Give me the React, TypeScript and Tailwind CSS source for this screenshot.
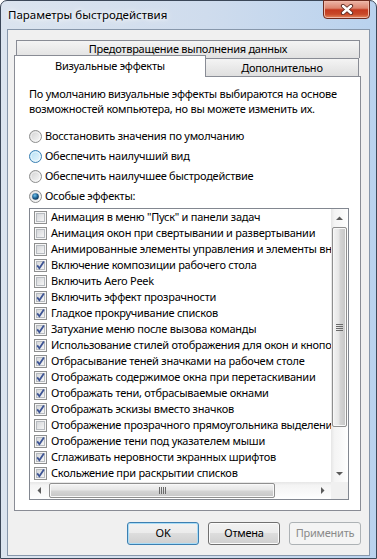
import React from "react";

const effects: [string, boolean][] = [
  ["Анимация в меню \"Пуск\" и панели задач", false],
  ["Анимация окон при свертывании и развертывании", false],
  ["Анимированные элементы управления и элементы внутри окна", false],
  ["Включение композиции рабочего стола", true],
  ["Включить Aero Peek", false],
  ["Включить эффект прозрачности", true],
  ["Гладкое прокручивание списков", true],
  ["Затухание меню после вызова команды", true],
  ["Использование стилей отображения для окон и кнопок", true],
  ["Отбрасывание теней значками на рабочем столе", true],
  ["Отображать содержимое окна при перетаскивании", true],
  ["Отображать тени, отбрасываемые окнами", true],
  ["Отображать эскизы вместо значков", true],
  ["Отображение прозрачного прямоугольника выделения", false],
  ["Отображение тени под указателем мыши", true],
  ["Сглаживать неровности экранных шрифтов", true],
  ["Скольжение при раскрытии списков", true],
];

// shared gradients for the radio / checkbox glyphs
function Defs() {
  return (
    <svg width="0" height="0" className="absolute">
      <defs>
        <linearGradient id="radOff" x1="0" y1="0" x2="1" y2="1">
          <stop offset="0" stopColor="#cfcfcf" />
          <stop offset="1" stopColor="#fbfbfb" />
        </linearGradient>
        <linearGradient id="radHover" x1="0" y1="0" x2="1" y2="1">
          <stop offset="0" stopColor="#b1dff5" />
          <stop offset="1" stopColor="#edf8fd" />
        </linearGradient>
        <radialGradient id="radDot" cx="0.4" cy="0.35" r="0.7">
          <stop offset="0" stopColor="#6ec2ee" />
          <stop offset="0.6" stopColor="#1b5d8e" />
          <stop offset="1" stopColor="#0c2f4d" />
        </radialGradient>
        <linearGradient id="chkIn" x1="0" y1="0" x2="1" y2="1">
          <stop offset="0" stopColor="#d3d5d8" />
          <stop offset="1" stopColor="#f7f7f7" />
        </linearGradient>
      </defs>
    </svg>
  );
}

function Radio({ kind }: { kind: "off" | "hover" | "on" }) {
  return (
    <svg width="13" height="13" viewBox="0 0 13 13" className="shrink-0">
      <circle
        cx="6.5"
        cy="6.5"
        r="6"
        fill={kind === "hover" ? "url(#radHover)" : "url(#radOff)"}
        stroke={kind === "hover" ? "#3c7fb1" : "#8e8f8f"}
      />
      <circle cx="6.5" cy="6.5" r="4.5" fill="none" stroke="#ffffff" strokeOpacity="0.5" />
      {kind === "on" && <circle cx="6.5" cy="6.5" r="3.3" fill="url(#radDot)" />}
    </svg>
  );
}

function Check({ on }: { on: boolean }) {
  return (
    <svg width="13" height="13" viewBox="0 0 13 13" className="shrink-0">
      <rect x="0.5" y="0.5" width="12" height="12" fill="#f6f6f6" stroke="#8e8f8f" />
      <rect x="2.5" y="2.5" width="8" height="8" fill="url(#chkIn)" stroke="#b7bbc0" />
      {on && (
        <path d="M3.2 6.4 L5.4 9.2 L9.9 2.6" fill="none" stroke="#3d5494" strokeWidth="1.8" />
      )}
    </svg>
  );
}

function Arrow({ dir }: { dir: "up" | "down" | "left" | "right" }) {
  const pts = {
    up: "0,4 3.5,0.5 7,4",
    down: "0,0 3.5,3.5 7,0",
    left: "4,0 0.5,3.5 4,7",
    right: "0,0 3.5,3.5 0,7",
  }[dir];
  const vertical = dir === "up" || dir === "down";
  return (
    <svg width={vertical ? 7 : 4} height={vertical ? 4 : 7}>
      <polygon points={pts} fill="#5b5b5b" />
    </svg>
  );
}

function Button({ children, kind }: { children: React.ReactNode; kind?: "default" | "disabled" }) {
  return (
    <div
      className={
        kind === "disabled"
          ? "w-[72px] h-[23px] rounded-[3px] border border-[#adb2b5] bg-[#f4f4f4] text-[#8a8a8a] flex items-center justify-center"
          : kind === "default"
            ? "w-[72px] h-[23px] rounded-[3px] border border-[#3c7fb1] bg-[linear-gradient(#f2f2f2_0%,#ebebeb_50%,#dddddd_50%,#cfcfcf_100%)] shadow-[inset_0_0_0_1px_#a9dcf6] flex items-center justify-center"
            : "w-[72px] h-[23px] rounded-[3px] border border-[#707070] bg-[linear-gradient(#f2f2f2_0%,#ebebeb_50%,#dddddd_50%,#cfcfcf_100%)] shadow-[inset_0_0_0_1px_#fbfbfb] flex items-center justify-center"
      }
    >
      {children}
    </div>
  );
}

export default function App() {
  return (
    <div className="w-[377px] h-[559px] overflow-hidden font-['Noto_Sans',sans-serif] text-[11px] tracking-[-0.25px] text-black">
      <Defs />
      <div className="relative h-full flex flex-col rounded-t-[7px] border border-[#3b4758] bg-[linear-gradient(90deg,#dbe4ef,#cfdced_55%,#b9d2ee)] px-[6px] pb-[2px]">
        {/* title bar */}
        <div className="h-[28px] flex items-center pl-[1px] text-[11.5px] tracking-normal [text-shadow:0_0_8px_#fff,0_0_4px_#fff]">
          Параметры быстродействия
        </div>
        <div className="absolute top-[-1px] right-[6px] w-[47px] h-[19px] rounded-b-[4px] border border-[#6e2b1f] bg-[linear-gradient(#ecb5a7,#dd8670_42%,#c4391f_52%,#c8492a_78%,#e58a5f)] shadow-[inset_0_0_0_1px_#f0b8a8] flex items-center justify-center">
          <svg width="14" height="11" viewBox="0 0 14 11">
            <path d="M3 2 L11 9 M11 2 L3 9" stroke="#5b2a22" strokeWidth="4.2" strokeLinecap="round" />
            <path d="M3 2 L11 9 M11 2 L3 9" stroke="#ffffff" strokeWidth="2.4" strokeLinecap="round" />
          </svg>
        </div>

        {/* client area */}
        <div className="flex-1 border border-[#8797ab] bg-[#f0f0f0] pl-[6px] pt-[10px]">
          <div className="w-[347px]">
            <div className="ml-[2px] w-[344px] h-[18px] border border-b-0 border-[#898c95] bg-[linear-gradient(#f4f4f4,#e1e1e1)] text-center leading-[16px]">
              Предотвращение выполнения данных
            </div>
            <div className="flex items-end -mt-[3px] h-[21px]">
              <div className="relative z-10 w-[192px] h-[22px] -mb-[1px] border border-b-0 border-[#898c95] bg-white text-center leading-[20px]">
                Визуальные эффекты
              </div>
              <div className="-ml-[1px] w-[154px] h-[18px] border border-b-0 border-[#898c95] bg-[linear-gradient(#f4f4f4,#dfdfdf)] text-center leading-[17px]">
                Дополнительно
              </div>
            </div>

            <div className="h-[435px] border border-[#898c95] bg-white pl-[14px] pt-[9px]">
              <p className="leading-[15px] whitespace-nowrap">
                По умолчанию визуальные эффекты выбираются на основе
                <br />
                возможностей компьютера, но вы можете изменить их.
              </p>

              <div className="mt-[10px]">
                {(
                  [
                    ["Восстановить значения по умолчанию", "off"],
                    ["Обеспечить наилучший вид", "hover"],
                    ["Обеспечить наилучшее быстродействие", "off"],
                    ["Особые эффекты:", "on"],
                  ] as [string, "off" | "hover" | "on"][]
                ).map(([label, kind]) => (
                  <div key={label} className="h-[20px] flex items-center gap-[3px]">
                    <Radio kind={kind} />
                    <span>{label}</span>
                  </div>
                ))}
              </div>

              {/* effects list */}
              <div className="mt-[2px] w-[320px] h-[292px] border border-[#828790] flex flex-col">
                <div className="flex">
                  <div className="w-[301px] h-[273px] overflow-hidden">
                    {effects.map(([label, on]) => (
                      <div key={label} className="h-[16px] flex items-center gap-[4px] pl-[4px] whitespace-nowrap">
                        <Check on={on} />
                        <span>{label}</span>
                      </div>
                    ))}
                  </div>
                  <div className="w-[17px] h-[273px] flex flex-col bg-[linear-gradient(90deg,#e6e6e6,#f4f4f4_20%,#fbfbfb_80%,#ffffff)]">
                    <div className="h-[17px] flex items-center justify-center">
                      <Arrow dir="up" />
                    </div>
                    <div className="mt-[1px] ml-[1px] w-[15px] h-[200px] rounded-[2px] border border-[#8f8f8f] bg-[linear-gradient(90deg,#f4f4f4,#e6e6e6_45%,#d4d4d4_55%,#c6c6c6)] shadow-[inset_0_0_0_1px_#f8f8f8] flex items-center justify-center">
                      <svg width="7" height="7">
                        <path d="M0 0.5 H7 M0 2.5 H7 M0 4.5 H7 M0 6.5 H7" stroke="#6a6a6a" />
                      </svg>
                    </div>
                    <div className="flex-1" />
                    <div className="h-[17px] flex items-center justify-center">
                      <Arrow dir="down" />
                    </div>
                  </div>
                </div>
                <div className="flex">
                  <div className="w-[301px] h-[17px] flex items-center bg-[linear-gradient(#e6e6e6,#f4f4f4_20%,#fbfbfb_80%,#ffffff)]">
                    <div className="w-[17px] h-[17px] flex items-center justify-center">
                      <Arrow dir="left" />
                    </div>
                    <div className="ml-[2px] w-[226px] h-[15px] rounded-[2px] border border-[#8f8f8f] bg-[linear-gradient(#f4f4f4,#e6e6e6_45%,#d4d4d4_55%,#c6c6c6)] shadow-[inset_0_0_0_1px_#f8f8f8] flex items-center justify-center">
                      <svg width="7" height="7">
                        <path d="M0.5 0 V7 M2.5 0 V7 M4.5 0 V7 M6.5 0 V7" stroke="#6a6a6a" />
                      </svg>
                    </div>
                    <div className="flex-1" />
                    <div className="w-[17px] h-[17px] flex items-center justify-center">
                      <Arrow dir="right" />
                    </div>
                  </div>
                  <div className="w-[17px] h-[17px] bg-[#f0f0f0]" />
                </div>
              </div>
            </div>

            <div className="mt-[11px] flex justify-end gap-[9px]">
              <Button kind="default">OK</Button>
              <Button>Отмена</Button>
              <Button kind="disabled">Применить</Button>
            </div>
          </div>
        </div>
      </div>
    </div>
  );
}
